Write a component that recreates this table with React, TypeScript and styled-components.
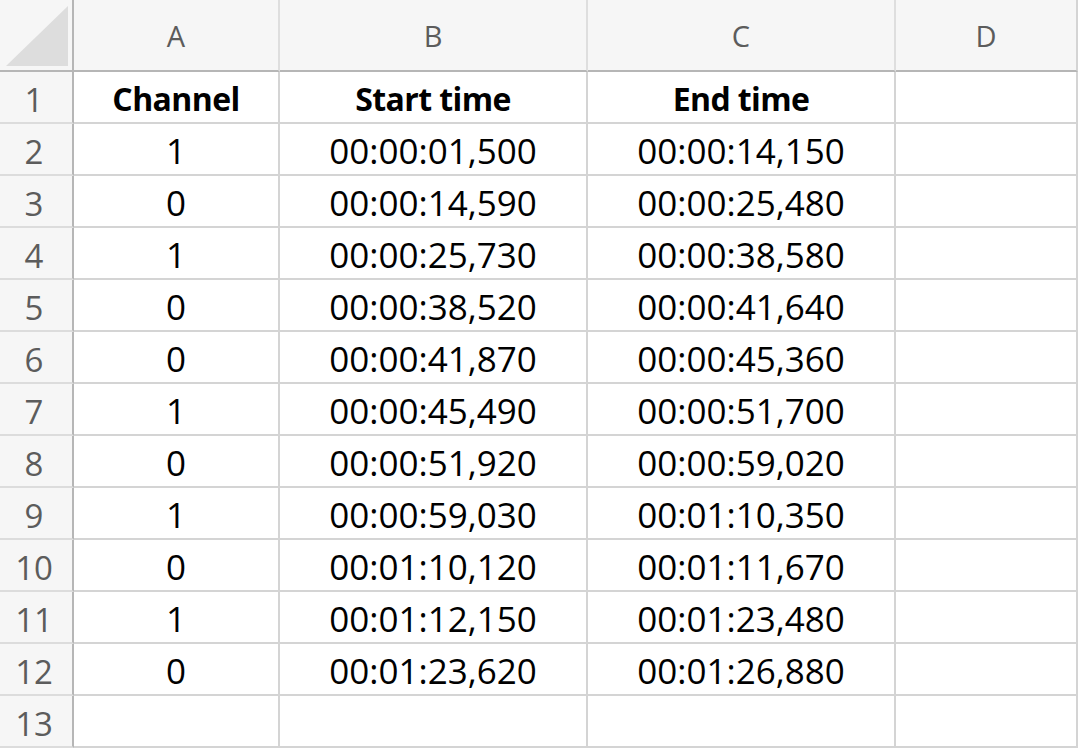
import React from "react";
import styled, { createGlobalStyle } from "styled-components";

const Global = createGlobalStyle`
  html, body { margin: 0; padding: 0; background: #ffffff; }
  * { box-sizing: border-box; }
`;

const Sheet = styled.div`
  display: grid;
  grid-template-columns: 74px 206px 308px 308px 182px;
  grid-template-rows: 72px repeat(13, 52px);
  width: 1078px;
  font-family: "Open Sans", "Noto Sans", sans-serif;
`;

const Corner = styled.div`
  background: #f6f6f6;
  border-right: 2px solid #b6b6b6;
  border-bottom: 2px solid #b6b6b6;
  display: flex;
  align-items: flex-end;
  justify-content: flex-end;
  padding: 0 4px 4px 0;
`;

const ColHead = styled.div<{ $last?: boolean }>`
  background: #f6f6f6;
  border-bottom: 2px solid #b6b6b6;
  border-right: 2px solid ${(p) => (p.$last ? "#d4d4d4" : "#dedede")};
  display: flex;
  align-items: center;
  justify-content: center;
  color: #5c5c5c;
  font-size: 29px;
  line-height: 1;
  padding-top: 0;
`;

const RowHead = styled.div`
  background: #f6f6f6;
  border-right: 2px solid #b6b6b6;
  border-bottom: 2px solid #dcdcdc;
  display: flex;
  align-items: center;
  justify-content: center;
  color: #5c5c5c;
  font-size: 33px;
  line-height: 45px;
  padding-top: 4px;
  padding-right: 4px;
`;

const Cell = styled.div<{ $bold?: boolean }>`
  background: #ffffff;
  border-right: 2px solid #d4d4d4;
  border-bottom: 2px solid #d4d4d4;
  display: flex;
  align-items: center;
  justify-content: center;
  color: #000000;
  font-size: ${(p) => (p.$bold ? "32px" : "35px")};
  font-weight: ${(p) => (p.$bold ? 700 : 400)};
  letter-spacing: ${(p) => (p.$bold ? "-0.6px" : "0")};
  line-height: 45px;
  padding-top: 3px;
  white-space: nowrap;
`;

const rows: [string, string, string][] = [
  ["1", "00:00:01,500", "00:00:14,150"],
  ["0", "00:00:14,590", "00:00:25,480"],
  ["1", "00:00:25,730", "00:00:38,580"],
  ["0", "00:00:38,520", "00:00:41,640"],
  ["0", "00:00:41,870", "00:00:45,360"],
  ["1", "00:00:45,490", "00:00:51,700"],
  ["0", "00:00:51,920", "00:00:59,020"],
  ["1", "00:00:59,030", "00:01:10,350"],
  ["0", "00:01:10,120", "00:01:11,670"],
  ["1", "00:01:12,150", "00:01:23,480"],
  ["0", "00:01:23,620", "00:01:26,880"],
];

export default function App() {
  return (
    <>
      <Global />
      <Sheet>
        <Corner>
          <svg width="62" height="60" viewBox="0 0 62 60">
            <polygon points="0,60 62,0 62,60" fill="#dddddd" />
          </svg>
        </Corner>
        <ColHead>A</ColHead>
        <ColHead>B</ColHead>
        <ColHead>C</ColHead>
        <ColHead $last>D</ColHead>

        <RowHead>1</RowHead>
        <Cell $bold>Channel</Cell>
        <Cell $bold>Start time</Cell>
        <Cell $bold>End time</Cell>
        <Cell />

        {rows.map((r, i) => (
          <React.Fragment key={i}>
            <RowHead>{i + 2}</RowHead>
            <Cell>{r[0]}</Cell>
            <Cell>{r[1]}</Cell>
            <Cell>{r[2]}</Cell>
            <Cell />
          </React.Fragment>
        ))}

        <RowHead>13</RowHead>
        <Cell />
        <Cell />
        <Cell />
        <Cell />
      </Sheet>
    </>
  );
}
